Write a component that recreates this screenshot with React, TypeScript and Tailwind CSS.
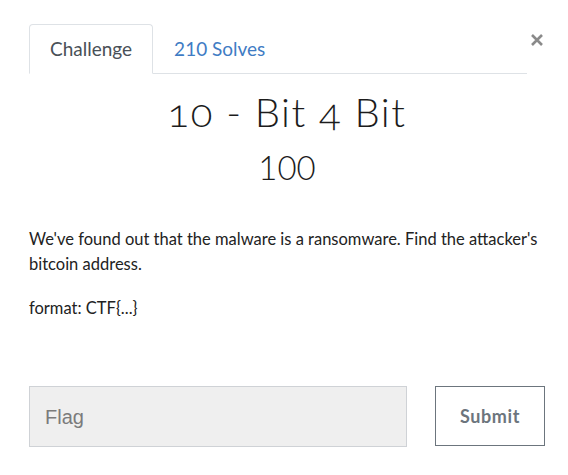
import React from "react";

export default function App() {
  return (
    <div className="relative w-[568px] h-[475px] bg-white pl-[29px] pr-[23px] pt-[24px] font-['Lato','Noto_Sans',sans-serif] text-[#212529]">
      <button className="absolute left-[529px] top-[32px] w-[16px] h-[16px] flex items-center justify-center text-[#8a8a8a]">
        <svg width="14" height="14" viewBox="0 0 14 14">
          <path d="M2 2 L12 12 M12 2 L2 12" stroke="currentColor" strokeWidth="2.6" strokeLinecap="butt" />
        </svg>
      </button>

      <div className="mr-[18px] flex border-b border-[#dee2e6]">
        <div className="-mb-px rounded-t-[4px] border border-[#dee2e6] border-b-white bg-white px-[20px] pt-[10px] pb-[11px] text-[19px] leading-[27px] text-[#495057]">
          Challenge
        </div>
        <div className="-mb-px border border-transparent px-[20px] pt-[10px] pb-[11px] text-[19px] leading-[27px] text-[#3f7cc4]">
          210 Solves
        </div>
      </div>

      <div className="mt-[15px] text-center text-[40px] leading-[46px] font-light tracking-[1.5px] oldstyle-nums text-[#1c1c1c]">
        10 - Bit 4 Bit
      </div>
      <div className="mt-[12px] text-center text-[33px] leading-[40px] font-light text-[#1c1c1c]">
        100
      </div>

      <div className="mt-[40px] text-[16.5px] leading-[25px] text-[#222]">
        <p className="mb-[19px]">
          We've found out that the malware is a ransomware. Find the attacker's bitcoin address.
        </p>
        <p>format: CTF{"{...}"}</p>
      </div>

      <div className="mt-[65px] flex gap-[28px]">
        <div className="flex h-[61px] w-[378px] items-center border border-[#cfd2d6] bg-[#efefef] pl-[15px] font-['Liberation_Sans',Arial,sans-serif] text-[20px] text-[#7b7b7b]">
          Flag
        </div>
        <button className="h-[60px] w-[110px] border border-[#6c757d] bg-white text-[18px] font-bold tracking-[0.6px] text-[#6c757d]">
          Submit
        </button>
      </div>
    </div>
  );
}
